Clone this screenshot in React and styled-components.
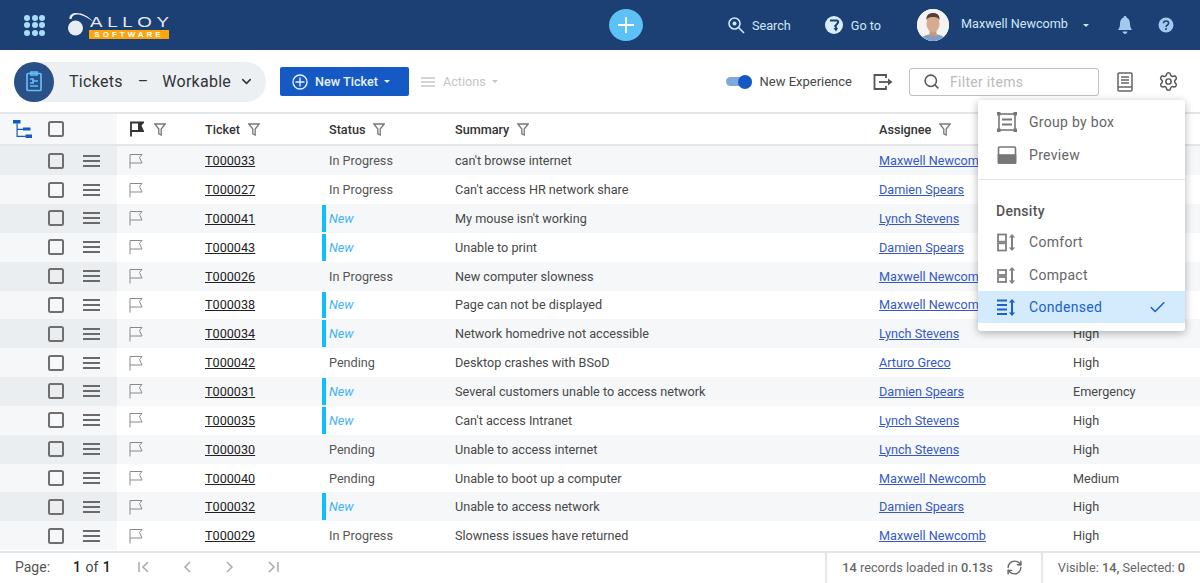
import React from "react";
import styled, { createGlobalStyle } from "styled-components";
import { ChevronDown, Search, Settings, Check, RefreshCw } from "lucide-react";

const GlobalStyle = createGlobalStyle`
  html, body { margin: 0; padding: 0; height: 100%; overflow: hidden; background: #fff; }
  body { font-family: Roboto, "Liberation Sans", sans-serif; font-size: 12.65px; color: #484848; }
  #root { height: 100%; }
  * { box-sizing: border-box; }
`;

const Page = styled.div`
  position: relative;
  display: flex;
  flex-direction: column;
  height: 583px;
  width: 1200px;
  overflow: hidden;
`;

// top navigation
const NavBar = styled.header`
  display: grid;
  grid-template-columns: 585px 34px 1fr;
  align-items: center;
  height: 50px;
  flex: none;
  padding-left: 24px;
  background: #1c3f74;
`;
const NavLeft = styled.div`
  display: flex;
  align-items: center;
  gap: 23px;
`;
const Waffle = styled.div`
  display: grid;
  grid-template-columns: repeat(3, 6px);
  gap: 1.5px;
  div {
    width: 6px;
    height: 6px;
    border-radius: 50%;
    background: #a9dcfb;
  }
`;
const Logo = styled.div`
  position: relative;
  width: 102px;
  height: 30px;
  margin-top: 1px;
`;
const LogoWord = styled.span`
  position: absolute;
  left: 22px;
  top: 4px;
  font-family: "Liberation Sans", sans-serif;
  font-size: 15px;
  line-height: 14px;
  letter-spacing: 3.7px;
  color: #e6e9ee;
  transform: scaleX(1.25);
  transform-origin: left center;
`;
const LogoTag = styled.span`
  position: absolute;
  left: 21px;
  top: 19px;
  width: 80px;
  height: 9px;
  background: #fda50f;
  color: #fff;
  font-family: "Liberation Sans", sans-serif;
  font-weight: 700;
  font-size: 8px;
  line-height: 9px;
  letter-spacing: 3px;
  text-align: center;
`;
const PlusButton = styled.button`
  display: flex;
  align-items: center;
  justify-content: center;
  width: 34px;
  height: 32px;
  padding: 0;
  border: 0;
  border-radius: 50%;
  background: #5ec1f5;
`;
const NavRight = styled.div`
  display: flex;
  align-items: center;
  height: 100%;
  padding-left: 84px;
  color: #cfe8fa;
`;
const NavLink = styled.div`
  display: flex;
  align-items: center;
  gap: ${(p) => p.$gap || 7}px;
  margin-right: ${(p) => p.$mr || 0}px;
`;
const Avatar = styled.div`
  width: 32px;
  height: 32px;
  border-radius: 50%;
  overflow: hidden;
  flex: none;
  background: #eee;
`;
const UserName = styled.span`
  margin: -3px 0 0 12px;
`;
const Caret = styled.span`
  display: inline-block;
  width: 0;
  height: 0;
  margin-left: ${(p) => p.$ml || 0}px;
  border-left: 3.5px solid transparent;
  border-right: 3.5px solid transparent;
  border-top: 3.5px solid ${(p) => p.$color || "#cfe8fa"};
`;

// toolbar under the nav
const ToolBar = styled.div`
  display: flex;
  align-items: center;
  height: 64px;
  flex: none;
  padding: 1px 0 0 14px;
  border-bottom: 2px solid #e4e6e8;
`;
const Pill = styled.div`
  display: flex;
  align-items: center;
  width: 252px;
  height: 40px;
  border-radius: 20px;
  background: #edf0f3;
  font-size: 16px;
  color: #333;
`;
const PillIcon = styled.div`
  display: flex;
  align-items: center;
  justify-content: center;
  width: 40px;
  height: 40px;
  border-radius: 50%;
  background: #2a5088;
  flex: none;
`;
const PillTitle = styled.span`
  margin-left: 15px;
  letter-spacing: 0.3px;
`;
const PillDash = styled.span`
  margin: 0 14px 0 15px;
`;
const PillView = styled.span`
  letter-spacing: 0.25px;
`;
const NewButton = styled.button`
  display: flex;
  align-items: center;
  width: 129px;
  height: 29px;
  margin-left: 14px;
  padding: 0 0 0 12px;
  border: 0;
  border-radius: 2px;
  background: #1559c4;
  color: #e8f1fc;
  font: 500 12.65px Roboto, sans-serif;
`;
const ActionsLabel = styled.div`
  display: flex;
  align-items: center;
  gap: 8px;
  margin-left: 12px;
  color: #c3c6c9;
`;
const ToolRight = styled.div`
  display: flex;
  align-items: center;
  margin-left: auto;
`;
const Toggle = styled.div`
  position: relative;
  width: 26px;
  height: 9px;
  border-radius: 4.5px;
  background: #7fa8df;
  &::after {
    content: "";
    position: absolute;
    right: 0;
    top: -2.5px;
    width: 14px;
    height: 14px;
    border-radius: 50%;
    background: #1559c4;
  }
`;
const ToggleLabel = styled.span`
  margin: 0 21px 0 7px;
  font-size: 13px;
`;
const FilterBox = styled.div`
  display: flex;
  align-items: center;
  gap: 10px;
  width: 190px;
  height: 28px;
  margin: 0 17px 0 16px;
  padding-left: 13px;
  border: 1px solid #bdbfc1;
  border-radius: 3px;
  color: #bbb;
  font-size: 14px;
  letter-spacing: 0.3px;
`;
const ToolIcon = styled.div`
  display: flex;
  margin-right: ${(p) => p.$mr || 0}px;
`;

// table
const Table = styled.div`
  flex: 1;
  min-height: 0;
  display: flex;
  flex-direction: column;
`;
const columns = "117px 76px 124px 126px 424px 194px 1fr";
const HeadRow = styled.div`
  display: grid;
  grid-template-columns: ${columns};
  height: 32.3px;
  flex: none;
  align-items: center;
  color: #333;
  font-weight: 500;
  border-bottom: 2px solid #e4e6e8;
`;
const Row = styled.div`
  display: grid;
  grid-template-columns: ${columns};
  height: 28.85px;
  flex: none;
  align-items: center;
  background: ${(p) => (p.$odd ? "#f5f7f9" : "#fff")};
`;
const Frozen = styled.div`
  display: flex;
  align-items: center;
  height: 100%;
  padding-left: ${(p) => p.$pl || 48}px;
  background: ${(p) => (p.$head ? "#f5f7f9" : p.$odd ? "#ebeef1" : "#f5f7f9")};
`;
const Box = styled.span`
  display: block;
  width: 16px;
  height: 16px;
  border: 2px solid #6f6f6f;
  border-radius: 2.5px;
  flex: none;
  margin-left: ${(p) => p.$ml || 0}px;
`;
const Burger = styled.span`
  position: relative;
  display: block;
  width: 17px;
  height: 12px;
  margin-left: 19px;
  border-top: 2px solid #6a6a6a;
  border-bottom: 2px solid #6a6a6a;
  &::after {
    content: "";
    position: absolute;
    left: 0;
    right: 0;
    top: 3px;
    height: 2px;
    background: #6a6a6a;
  }
`;
const Cell = styled.div`
  display: flex;
  align-items: center;
  gap: ${(p) => p.$gap || 0}px;
  height: 100%;
  padding-left: ${(p) => p.$pl || 12}px;
  white-space: nowrap;
`;
const FilterGap = styled.span`
  width: ${(p) => p.$w}px;
`;
const TicketLink = styled.a`
  color: #222;
  text-decoration: underline;
`;
const UserLink = styled.a`
  color: #3559c4;
  text-decoration: underline;
`;
const StatusCell = styled(Cell)`
  position: relative;
  color: ${(p) => (p.$isNew ? "#3fb4f5" : "#555")};
  font-style: ${(p) => (p.$isNew ? "italic" : "normal")};
  &::before {
    content: "";
    display: ${(p) => (p.$isNew ? "block" : "none")};
    position: absolute;
    left: 5px;
    top: 1px;
    bottom: 1px;
    width: 4px;
    background: #12bdfb;
  }
`;

// footer
const Footer = styled.footer`
  display: flex;
  align-items: center;
  height: 32px;
  flex: none;
  padding: 0 0 2px 15px;
  border-top: 2px solid #e4e6e8;
  color: #555;
  font-size: 14px;
`;
const Pager = styled.div`
  display: flex;
  align-items: center;
  gap: 27px;
  margin-left: 25px;
`;
const PageCount = styled.span`
  margin-left: 23px;
  color: #444;
  word-spacing: 1px;
  b { font-weight: 500; color: #222; }
`;
const FootCell = styled.div`
  display: flex;
  align-items: center;
  height: 32px;
  margin-bottom: -2px;
  padding: 0 ${(p) => p.$pr || 15}px 2px 15px;
  border-left: 2px solid #e4e6e8;
  color: #666;
  font-size: 12.75px;
  margin-left: ${(p) => (p.$auto ? "auto" : 0)};
  b { font-weight: 500; }
`;

// density popup over the table
const Menu = styled.div`
  position: absolute;
  left: 978px;
  top: 100px;
  width: 207px;
  height: 231px;
  padding-top: 5px;
  border-radius: 3px;
  background: #fff;
  box-shadow: 0 2px 8px rgba(0, 0, 0, 0.3);
  font-size: 14px;
  color: #666;
  letter-spacing: 0.3px;
`;
const MenuItem = styled.div`
  display: flex;
  align-items: center;
  gap: 12px;
  height: ${(p) => p.$h || 33}px;
  padding-left: 19px;
  background: ${(p) => (p.$active ? "#d3ebfc" : "transparent")};
  color: ${(p) => (p.$active ? "#1d62c9" : "inherit")};
`;
const MenuCheck = styled.span`
  display: flex;
  margin: 0 18px 0 auto;
`;
const MenuRule = styled.div`
  height: 1px;
  margin-top: 8px;
  background: #e2e2e2;
`;
const MenuHead = styled.div`
  margin: 23px 0 6px 18px;
  height: 16px;
  line-height: 16px;
  font-weight: 500;
  color: #555;
`;

const tickets = [
  ["T000033", "In Progress", "can't browse internet", "Maxwell Newcomb", ""],
  ["T000027", "In Progress", "Can't access HR network share", "Damien Spears", ""],
  ["T000041", "New", "My mouse isn't working", "Lynch Stevens", ""],
  ["T000043", "New", "Unable to print", "Damien Spears", ""],
  ["T000026", "In Progress", "New computer slowness", "Maxwell Newcomb", ""],
  ["T000038", "New", "Page can not be displayed", "Maxwell Newcomb", ""],
  ["T000034", "New", "Network homedrive not accessible", "Lynch Stevens", "High"],
  ["T000042", "Pending", "Desktop crashes with BSoD", "Arturo Greco", "High"],
  ["T000031", "New", "Several customers unable to access network", "Damien Spears", "Emergency"],
  ["T000035", "New", "Can't access Intranet", "Lynch Stevens", "High"],
  ["T000030", "Pending", "Unable to access internet", "Lynch Stevens", "High"],
  ["T000040", "Pending", "Unable to boot up a computer", "Maxwell Newcomb", "Medium"],
  ["T000032", "New", "Unable to access network", "Damien Spears", "High"],
  ["T000029", "In Progress", "Slowness issues have returned", "Maxwell Newcomb", "High"],
];

function FlagIcon({ solid }) {
  return (
    <svg width="14" height="16" viewBox="0 0 14 16" fill="none" stroke={solid ? "#333" : "#8a8a8a"} strokeWidth={solid ? 1.8 : 1}>
      <path d="M1 15.5V1.5H13L10.5 4.5 13 10H1" />
      {solid && <path d="M8 2h4.5L10.5 4.5 12 9.5H8z" fill="#333" stroke="none" />}
    </svg>
  );
}

function FunnelIcon() {
  return (
    <svg width="12" height="13" viewBox="0 0 12 13" fill="none" stroke="#777" strokeWidth="1.3">
      <path d="M.8 1h10.4L7.2 6v6l-2.4-1.2V6z" />
    </svg>
  );
}

function HeadLabel({ label }) {
  return (
    <>
      {label}
      <FilterGap $w={8} />
      <FunnelIcon />
    </>
  );
}

function PagerIcon({ d }) {
  return (
    <svg width="16" height="16" viewBox="0 0 16 16" fill="none" stroke="#aaa" strokeWidth="1.5">
      <path d={d} />
    </svg>
  );
}

function DensityIcon({ kind, color = "#808080" }) {
  return (
    <svg width="20" height="20" viewBox="0 0 20 20" fill="none" stroke={color} strokeWidth="1.8">
      {kind === "comfort" && (
        <>
          <rect x="1" y="2.5" width="8" height="7.2" />
          <rect x="1" y="11.3" width="8" height="7.2" />
        </>
      )}
      {kind === "compact" && (
        <>
          <rect x="1" y="5" width="8" height="5" />
          <rect x="1" y="12" width="8" height="5" />
        </>
      )}
      {kind === "condensed" && <path d="M0 3.5h10M0 8h10M0 12.5h10M0 17h10" />}
      <path d="M15 3v15" strokeWidth="2" />
      <path d="M11.8 5.500 15 2l3.200 3.500zM11.800 15.500 15 19l3.200-3.500z" fill={color} stroke="none" />
    </svg>
  );
}

function App() {
  return (
    <Page>
      <GlobalStyle />
      <NavBar>
        <NavLeft>
          <Waffle>
            {Array.from({ length: 9 }).map((_, i) => (
              <div key={i} />
            ))}
          </Waffle>
          <Logo>
            <svg width="30" height="27" viewBox="0 0 30 27" style={{ position: "absolute", left: 0, top: 0 }}>
              <circle cx="7.5" cy="17" r="7.5" fill="#e9ecf0" />
              <path d="M1.5 8C1 2 7 1 13 2.5c5 1.500 9 4.500 12.500 8.500-5-3.500-9-6-13-7C8 3 4.500 3.500 3.500 8z" fill="#e9ecf0" />
            </svg>
            <LogoWord>ALLOY</LogoWord>
            <LogoTag>SOFTWARE</LogoTag>
          </Logo>
        </NavLeft>
        <PlusButton>
          <svg width="18" height="18" viewBox="0 0 18 18" stroke="#fff" strokeWidth="1.8">
            <path d="M9 1v16M1 9h16" />
          </svg>
        </PlusButton>
        <NavRight>
          <NavLink $mr={34}>
            <svg width="18" height="18" viewBox="0 0 18 18" fill="none" stroke="#cfe8fa" strokeWidth="1.6">
              <circle cx="7.5" cy="7.5" r="5.5" />
              <circle cx="7.5" cy="7.5" r="2" fill="#cfe8fa" stroke="none" />
              <path d="M11.500 11.500 17 17" />
            </svg>
            Search
          </NavLink>
          <NavLink $mr={36} $gap={8}>
            <svg width="18" height="18" viewBox="0 0 18 18">
              <circle cx="9" cy="9" r="9" fill="#d8eefc" />
              <path d="M5 4.500h7c1.400 0 1.500 1.500.7 2.700L10.200 10l1.300 2" fill="none" stroke="#1c3f74" strokeWidth="2" />
              <path d="M8.500 12h4.500l-2 3.500z" fill="#1c3f74" />
            </svg>
            Go to
          </NavLink>
          <Avatar>
            <svg width="32" height="32" viewBox="0 0 32 32">
              <rect width="32" height="32" fill="#f4f3f1" />
              <path d="M3 32c1-5 7-7 13-7s12 2 13 7z" fill="#7f9fc4" />
              <rect x="12.5" y="20" width="7" height="7" fill="#c79a80" />
              <ellipse cx="16" cy="14.5" rx="6.500" ry="9" fill="#d6ab92" />
              <path d="M9.500 11C9 5 13 4 16 4s7 1 6.500 7c-1.500-2.500-3.500-3-6.500-3s-5 .5-6.500 3z" fill="#4f4138" />
            </svg>
          </Avatar>
          <UserName>Maxwell Newcomb</UserName>
          <Caret $ml={15} />
          <svg width="18" height="20" viewBox="0 0 18 20" style={{ marginLeft: 27 }} fill="#a4c8f0">
            <path d="M9 1c1 0 1.500.6 1.500 1.500C13 3.400 14 6 14 9c0 3 1 4.500 2 6H2c1-1.500 2-3 2-6 0-3 1-5.600 3.500-6.500C7.500 1.600 8 1 9 1z" />
            <path d="M6.500 16.500h5c-.3 1.500-1.300 2.500-2.500 2.500s-2.200-1-2.500-2.500z" />
          </svg>
          <svg width="16" height="16" viewBox="0 0 16 16" style={{ marginLeft: 24 }}>
            <circle cx="8" cy="8" r="7.5" fill="#a4c8f0" />
            <path d="M5.500 6.200C5.600 4.800 6.600 4 8 4s2.600.8 2.600 2.200c0 1.900-2.600 1.900-2.600 3.800" fill="none" stroke="#1c3f74" strokeWidth="1.6" />
            <circle cx="8" cy="12" r="1" fill="#1c3f74" />
          </svg>
        </NavRight>
      </NavBar>

      <ToolBar>
        <Pill>
          <PillIcon>
            <svg width="18" height="21" viewBox="0 0 18 21" fill="none" stroke="#62bdf8" strokeWidth="1.7">
              <rect x="2" y="2.5" width="14" height="17" rx="1" />
              <path d="M6 1h6v3H6zM5 8h3v4H5M8 10h5M5 15h8" />
            </svg>
          </PillIcon>
          <PillTitle>Tickets</PillTitle>
          <PillDash>–</PillDash>
          <PillView>Workable</PillView>
          <ChevronDown size={15} color="#333" strokeWidth={2.4} style={{ marginLeft: 8 }} />
        </Pill>
        <NewButton>
          <svg width="16" height="16" viewBox="0 0 16 16" fill="none" stroke="#e8f1fc" strokeWidth="1.4" style={{ marginRight: 7 }}>
            <circle cx="8" cy="8" r="7" />
            <path d="M8 3.500v9M3.500 8h9" />
          </svg>
          New Ticket
          <Caret $ml={6} $color="#e8f1fc" />
        </NewButton>
        <ActionsLabel>
          <svg width="14" height="10" viewBox="0 0 14 10" stroke="#c3c6c9" strokeWidth="1.6">
            <path d="M0 1h14M0 5h14M0 9h14" />
          </svg>
          Actions
          <Caret $ml={-2} $color="#c3c6c9" />
        </ActionsLabel>
        <ToolRight>
          <Toggle />
          <ToggleLabel>New Experience</ToggleLabel>
          <svg width="20" height="18" viewBox="0 0 20 18" fill="none" stroke="#555" strokeWidth="1.8">
            <path d="M13 5V2H1.500v14H13v-3" />
            <path d="M6 9h12" />
            <path d="M15 5.500 19.500 9 15 12.500z" fill="#555" stroke="none" />
          </svg>
          <FilterBox>
            <Search size={17} color="#555" strokeWidth={2.2} />
            Filter items
          </FilterBox>
          <ToolIcon $mr={24}>
            <svg width="18" height="20" viewBox="0 0 18 20" fill="none" stroke="#666" strokeWidth="1.5">
              <path d="M2 2a1 1 0 0 1 1-1h12a1 1 0 0 1 1 1v16a1 1 0 0 1-1 1H3a1 1 0 0 1-1-1z" />
              <path d="M5 5h8M5 8h8M5 11h8M2 15h14" />
            </svg>
          </ToolIcon>
          <ToolIcon $mr={21}>
            <Settings size={21} color="#555" strokeWidth={1.7} />
          </ToolIcon>
        </ToolRight>
      </ToolBar>

      <Table>
        <HeadRow>
          <Frozen $head $pl={12}>
            <svg width="20" height="19" viewBox="0 0 20 19" fill="#1559c4" style={{ flex: "none" }}>
              <rect x="1" y="0" width="7.5" height="3.5" />
              <rect x="11" y="7.5" width="7.5" height="3" />
              <rect x="13.5" y="14.5" width="6.5" height="3.5" />
              <path d="M4.500 3.500H5.700v5.300H11V10H5.700v5.700h7.800v1.200h-9z" />
            </svg>
            <Box $ml={16} />
          </Frozen>
          <Cell $pl={13}>
            <FlagIcon solid />
            <FilterGap $w={10} />
            <FunnelIcon />
          </Cell>
          <Cell><HeadLabel label="Ticket" /></Cell>
          <Cell><HeadLabel label="Status" /></Cell>
          <Cell><HeadLabel label="Summary" /></Cell>
          <Cell><HeadLabel label="Assignee" /></Cell>
          <Cell />
        </HeadRow>
        {tickets.map(([id, status, summary, user, priority], i) => {
          const odd = i % 2 === 0;
          return (
            <Row key={id} $odd={odd}>
              <Frozen $odd={odd}>
                <Box />
                <Burger />
              </Frozen>
              <Cell><FlagIcon /></Cell>
              <Cell><TicketLink>{id}</TicketLink></Cell>
              <StatusCell $isNew={status === "New"}>{status}</StatusCell>
              <Cell>{summary}</Cell>
              <Cell><UserLink>{user}</UserLink></Cell>
              <Cell>{priority}</Cell>
            </Row>
          );
        })}
      </Table>

      <Footer>
        Page:
        <PageCount><b>1</b> of <b>1</b></PageCount>
        <Pager>
          <PagerIcon d="M3 3v10M12 3 7 8l5 5" />
          <PagerIcon d="M11 3 6 8l5 5" />
          <PagerIcon d="M5 3l5 5-5 5" />
          <PagerIcon d="M4 3l5 5-5 5M13 3v10" />
        </Pager>
        <FootCell $auto $pr={18}>
          <b>14</b>&nbsp;records loaded in&nbsp;<b>0.13</b>s
          <RefreshCw size={17} color="#666" style={{ marginLeft: 13 }} />
        </FootCell>
        <FootCell>
          Visible:&nbsp;<b>14,</b>&nbsp;Selected:&nbsp;<b>0</b>
        </FootCell>
      </Footer>

      <Menu>
        <MenuItem>
          <svg width="20" height="20" viewBox="0 0 20 20" fill="none" stroke="#777" strokeWidth="1.6">
            <rect x="2" y="2" width="16" height="16" />
            <path d="M0 0h3.500v3.500H0zM16.500 0H20v3.500h-3.500zM0 16.500h3.500V20H0zM16.500 16.500H20V20h-3.500z" fill="#777" stroke="none" />
            <path d="M5 7.500h10M5 12.500h10" strokeWidth="2.2" />
          </svg>
          Group by box
        </MenuItem>
        <MenuItem>
          <svg width="20" height="20" viewBox="0 0 20 20" fill="none" stroke="#777" strokeWidth="1.6">
            <rect x="1.500" y="2" width="17" height="16" rx="1" />
            <rect x="1.500" y="10" width="17" height="8" fill="#777" />
          </svg>
          Preview
        </MenuItem>
        <MenuRule />
        <MenuHead>Density</MenuHead>
        <MenuItem>
          <DensityIcon kind="comfort" />
          Comfort
        </MenuItem>
        <MenuItem>
          <DensityIcon kind="compact" />
          Compact
        </MenuItem>
        <MenuItem $active $h={32}>
          <DensityIcon kind="condensed" color="#1d62c9" />
          Condensed
          <MenuCheck><Check size={19} color="#1d62c9" /></MenuCheck>
        </MenuItem>
      </Menu>
    </Page>
  );
}

export default App;
